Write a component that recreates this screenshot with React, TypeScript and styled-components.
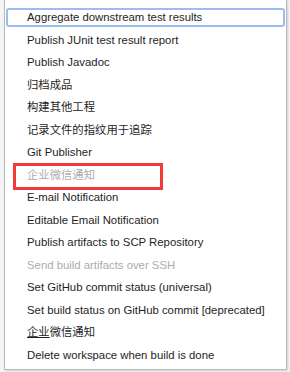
import React from 'react';
import styled, {createGlobalStyle} from 'styled-components';

const GlobalStyle = createGlobalStyle`
  html, body {
    margin: 0;
    padding: 0;
    background: #f4f4f4;
    font-family: "Liberation Sans", Arial, "Noto Sans CJK SC", sans-serif;
  }
`;

const Page = styled.div`
  width: 290px;
  height: 372px;
  overflow: hidden;
  padding: 0 3px 0 4px;
  box-sizing: border-box;
`;

const Menu = styled.ul`
  position: relative;
  list-style: none;
  margin: 0;
  padding: 9px 2px 3px;
  height: 370px;
  box-sizing: border-box;
  background: white;
  border: 1px solid #b9b9b9;
  border-top: none;
  box-shadow: 1px 1px 2px rgba(0, 0, 0, 0.15);
`;

const Item = styled.li<{$disabled?: boolean; $focused?: boolean}>`
  height: 17px;
  line-height: 17px;
  margin-bottom: 5.5px;
  padding-left: 20px;
  font-size: 11.35px;
  white-space: nowrap;
  color: ${p => (p.$disabled ? '#acacac' : '#1e1e1e')};
  border-radius: 2px;
  outline: ${p => (p.$focused ? '2px solid #9dbdf0' : 'none')};
  outline-offset: -1px;
`;

const Hover = styled.span`
  text-decoration: underline;
`;

const Highlight = styled.div`
  position: absolute;
  left: 8px;
  top: 163px;
  width: 150px;
  height: 27px;
  border: 3px solid #f23a3a;
  box-sizing: border-box;
`;

const items: {label: string; disabled?: boolean}[] = [
  {label: 'Aggregate downstream test results'},
  {label: 'Publish JUnit test result report'},
  {label: 'Publish Javadoc'},
  {label: '归档成品'},
  {label: '构建其他工程'},
  {label: '记录文件的指纹用于追踪'},
  {label: 'Git Publisher'},
  {label: '企业微信通知', disabled: true},
  {label: 'E-mail Notification'},
  {label: 'Editable Email Notification'},
  {label: 'Publish artifacts to SCP Repository'},
  {label: 'Send build artifacts over SSH', disabled: true},
  {label: 'Set GitHub commit status (universal)'},
  {label: 'Set build status on GitHub commit [deprecated]'},
  {label: 'hover'},
  {label: 'Delete workspace when build is done'},
];

function App() {
  return (
    <Page>
      <GlobalStyle/>
      <Menu>
        {items.map((item, i) =>
          <Item key={i} $disabled={item.disabled} $focused={i === 0}>
            {item.label === 'hover'
              ? <><Hover>企业</Hover>微信通知</>
              : item.label}
          </Item>
        )}
        <Highlight/>
      </Menu>
    </Page>
  );
}

export default App;
